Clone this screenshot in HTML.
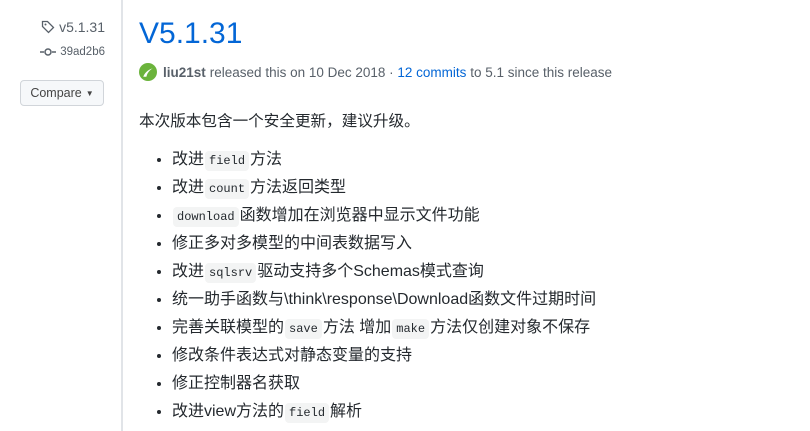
<!DOCTYPE html>
<html><head><meta charset="utf-8"><style>
body{margin:0;width:810px;height:431px;overflow:hidden;background:#fff;font-family:"Liberation Sans","Noto Sans CJK SC",sans-serif;color:#24292e;position:relative}
.side{position:absolute;left:0;top:0;width:121px;height:431px;border-right:2px solid #e1e4e8}
.tag{position:absolute;right:16px;top:19px;font-size:14px;color:#586069;display:flex;align-items:center;gap:4px}
.commit{position:absolute;right:16px;top:46px;font-size:11.5px;color:#586069;font-family:"Liberation Sans",sans-serif;display:flex;align-items:center;gap:4px}
.btn{position:absolute;left:20px;top:80px;width:84px;height:26px;border:1px solid #d1d5da;border-radius:4px;background:#f6f8fa;font-size:12.5px;color:#444;display:flex;align-items:center;justify-content:center;gap:4px;box-sizing:border-box}
h1{position:absolute;left:139px;top:14px;margin:0;font-size:30px;font-weight:400;color:#0366d6;line-height:40px}
.meta{position:absolute;left:139px;top:63px;font-size:13.5px;color:#586069;display:flex;align-items:center;white-space:nowrap}
.meta b{color:#586069;margin:0 4px 0 6px}
.meta a{color:#0366d6}
p{position:absolute;left:139px;top:109px;margin:0;font-size:15.6px}
ul{position:absolute;left:139px;top:147px;margin:0;padding:0 0 0 33px;font-size:16px}
li{height:28px;line-height:26px;white-space:nowrap}
code{font-family:"Liberation Mono",monospace;font-size:12px;background:#f3f4f4;border-radius:4px;padding:3px 4px;margin:0 1px}
</style></head><body>
<div class="side">
<div class="tag"><svg width="14" height="14" viewBox="0 0 14 14"><path d="M1.5 1.5h5l6 6-5 5-6-6z" fill="none" stroke="#586069" stroke-width="1.3"/><circle cx="4.5" cy="4.5" r="1" fill="#586069"/></svg>v5.1.31</div>
<div class="commit"><svg width="16" height="10" viewBox="0 0 16 10"><path d="M0 5h4M12 5h4" stroke="#586069" stroke-width="1.5"/><circle cx="8" cy="5" r="3" fill="none" stroke="#586069" stroke-width="1.5"/></svg>39ad2b6</div>
<div class="btn">Compare <span style="font-size:8px">▼</span></div>
</div>
<h1>V5.1.31</h1>
<div class="meta"><svg width="18" height="18" viewBox="0 0 17 17"><circle cx="8.5" cy="8.5" r="8.5" fill="#6bb33c"/><path d="M4 13c2-5 6-7 9-8-3 2-5 4-6 8z" fill="#fff"/></svg><b>liu21st</b>released this on 10 Dec 2018 · <a>&nbsp;12 commits</a>&nbsp;to 5.1 since this release</div>
<p>本次版本包含一个安全更新，建议升级。</p>
<ul>
<li>改进<code>field</code>方法</li>
<li>改进<code>count</code>方法返回类型</li>
<li><code>download</code>函数增加在浏览器中显示文件功能</li>
<li>修正多对多模型的中间表数据写入</li>
<li>改进<code>sqlsrv</code>驱动支持多个Schemas模式查询</li>
<li>统一助手函数与\think\response\Download函数文件过期时间</li>
<li>完善关联模型的<code>save</code>方法 增加<code>make</code>方法仅创建对象不保存</li>
<li>修改条件表达式对静态变量的支持</li>
<li>修正控制器名获取</li>
<li>改进view方法的<code>field</code>解析</li>
</ul>
</body></html>
